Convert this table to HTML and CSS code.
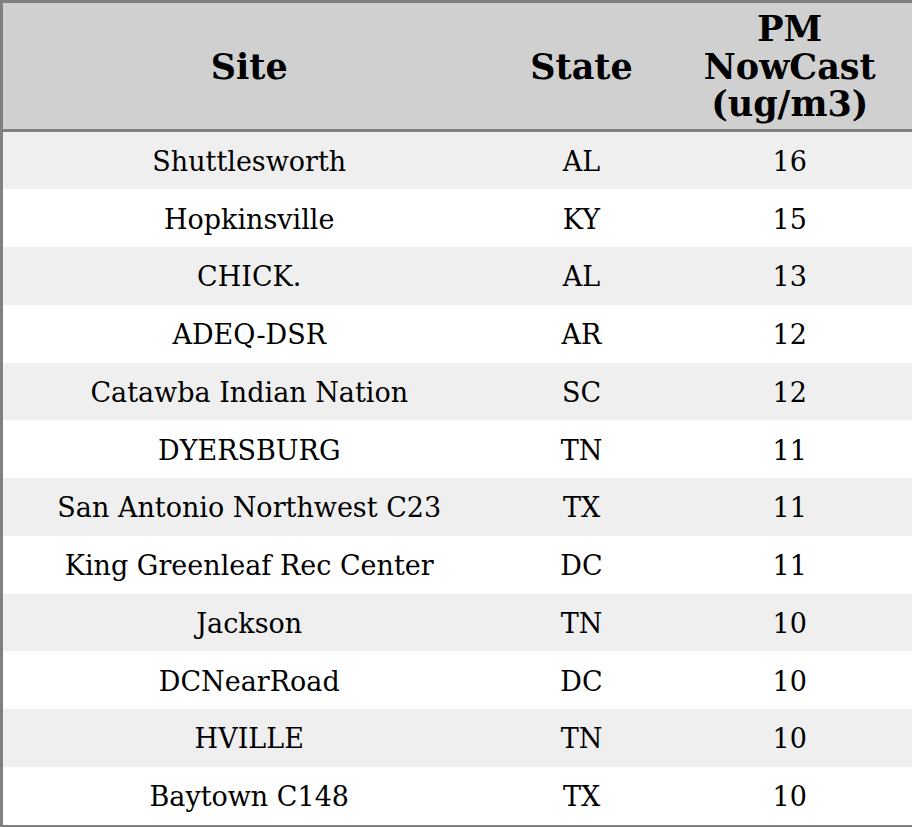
FILE: index.html
```html
<!DOCTYPE html>
<html>
<head>
<meta charset="utf-8">
<link rel="stylesheet" href="styles.css">
</head>
<body>
<table class="tbl">
<colgroup><col class="c1"><col class="c2"><col class="c3"></colgroup>
<thead>
<tr><th>Site</th><th>State</th><th>PM<br>NowCast<br>(ug/m3)</th></tr>
</thead>
<tbody>
<tr><td>Shuttlesworth</td><td>AL</td><td>16</td></tr>
<tr><td>Hopkinsville</td><td>KY</td><td>15</td></tr>
<tr><td>CHICK.</td><td>AL</td><td>13</td></tr>
<tr><td>ADEQ-DSR</td><td>AR</td><td>12</td></tr>
<tr><td>Catawba Indian Nation</td><td>SC</td><td>12</td></tr>
<tr><td>DYERSBURG</td><td>TN</td><td>11</td></tr>
<tr><td>San Antonio Northwest C23</td><td>TX</td><td>11</td></tr>
<tr><td>King Greenleaf Rec Center</td><td>DC</td><td>11</td></tr>
<tr><td>Jackson</td><td>TN</td><td>10</td></tr>
<tr><td>DCNearRoad</td><td>DC</td><td>10</td></tr>
<tr><td>HVILLE</td><td>TN</td><td>10</td></tr>
<tr><td>Baytown C148</td><td>TX</td><td>10</td></tr>
</tbody>
</table>
</body>
</html>
```
FILE: styles.css
```css
html, body { margin: 0; padding: 0; background: #fff; }
.tbl {
  width: 912px;
  height: 827px;
  border-collapse: collapse;
  border: 3px solid #808080;
  font-family: "DejaVu Serif", serif;
  color: #000;
  table-layout: fixed;
  box-sizing: border-box;
}
.c1 { width: 494px; }
.c2 { width: 172px; }
.c3 { width: 246px; }
.tbl th {
  background: #d0d0d0;
  font-size: 35px;
  font-weight: bold;
  line-height: 37.5px;
  padding: 7px 0 6px;
  text-align: center;
  vertical-align: middle;
  border-bottom: 3px solid #808080;
  height: 112px;
}
.tbl td {
  font-size: 27px;
  text-align: center;
  vertical-align: middle;
  padding: 2px 0 0;
  height: 55.75px;
}
.tbl tbody tr:nth-child(odd) td { background: #efefef; }
.tbl tbody tr:nth-child(even) td { background: #fff; }
```
